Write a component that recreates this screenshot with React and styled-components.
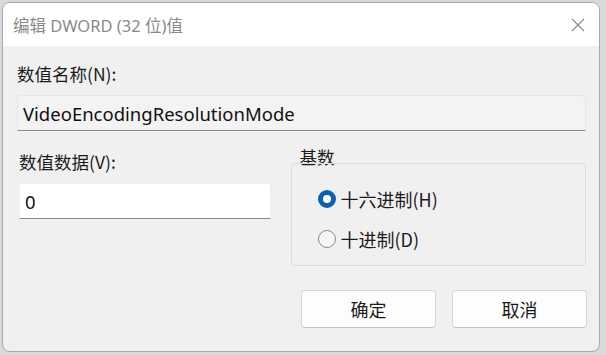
import styled, { createGlobalStyle } from 'styled-components';

const Global = createGlobalStyle`
  html, body {
    margin: 0;
    padding: 0;
    background: #d9d9d9;
  }
  body {
    font-family: "Noto Sans", "Noto Sans CJK SC", sans-serif;
  }
`;

const Page = styled.div`
  width: 606px;
  height: 355px;
  padding: 2px 6px 3px 2px;
  box-sizing: border-box;
`;

const Window = styled.div`
  height: 100%;
  border: 1px solid #a8a8a8;
  border-radius: 8px;
  overflow: hidden;
  background: #f0f0f0;
  display: flex;
  flex-direction: column;
  box-sizing: border-box;
`;

const TitleBar = styled.div`
  height: 43px;
  background: #ffffff;
  display: flex;
  align-items: center;
  justify-content: space-between;
  padding: 0 14px 0 10px;
  flex-shrink: 0;
`;

const Title = styled.span`
  font-size: 16.5px;
  color: #8a8a8a;
  font-family: "Noto Sans", "Noto Sans CJK SC", sans-serif;
`;

const Close = styled.svg`
  width: 14px;
  height: 14px;
`;

const Body = styled.div`
  flex: 1;
  padding: 18px 13px 0 14px;
  display: flex;
  flex-direction: column;
`;

const Label = styled.div`
  font-size: 17.5px;
  color: #1b1b1b;
  line-height: 20px;
  font-family: "Noto Sans CJK SC", sans-serif;
`;

const Field = styled.div`
  height: 36px;
  margin-top: ${p => p.$top || 8}px;
  width: ${p => p.$width || 'auto'};
  background: ${p => (p.$readonly ? '#f3f3f3' : '#ffffff')};
  border: 1px solid ${p => (p.$readonly ? '#e6e6e6' : '#f0f0f0')};
  border-bottom: 1px solid #8a8a8a;
  border-radius: 3px 3px 0 0;
  box-sizing: border-box;
  display: flex;
  align-items: center;
  padding-left: 5px;
  font-size: 18.5px;
  color: #111;
  font-family: "Noto Sans", sans-serif;
`;

const Row = styled.div`
  display: flex;
  margin-top: 16px;
`;

const LeftCol = styled.div`
  width: 272px;
  padding-left: 2px;
  padding-top: 5px;
`;

const GroupWrap = styled.div`
  width: 296px;
  display: flex;
  flex-direction: column;
`;

const GroupTitle = styled.div`
  font-size: 17.5px;
  color: #1b1b1b;
  line-height: 20px;
  padding-left: 9px;
  font-family: "Noto Sans CJK SC", sans-serif;
`;

const GroupBox = styled.div`
  margin-top: -4px;
  height: 103px;
  border: 1px solid #dcdcdc;
  border-radius: 3px;
  box-sizing: border-box;
  padding: 26px 0 0 26px;
  display: flex;
  flex-direction: column;
  gap: 22px;
`;

const Option = styled.label`
  display: flex;
  align-items: center;
  gap: 5px;
  font-size: 18px;
  color: #1b1b1b;
  line-height: 18px;
  font-family: "Noto Sans CJK SC", sans-serif;
`;

const Radio = styled.span`
  width: 18px;
  height: 18px;
  border-radius: 50%;
  box-sizing: border-box;
  flex-shrink: 0;
  ${p =>
    p.$checked
      ? `background: #ffffff; border: 5.5px solid #0d5fb0;`
      : `background: #f6f6f6; border: 1px solid #8a8a8a;`}
`;

const Buttons = styled.div`
  display: flex;
  justify-content: flex-end;
  gap: 16px;
  margin-top: 24px;
  margin-right: -1px;
`;

const Button = styled.button`
  width: 135px;
  height: 38px;
  background: #fdfdfd;
  border: 1px solid #d6d6d6;
  border-bottom-color: #c2c2c2;
  border-radius: 4px;
  font-size: 18px;
  color: #1b1b1b;
  font-family: "Noto Sans CJK SC", sans-serif;
  padding: 0;
`;

export default function App() {
  return (
    <Page>
      <Global />
      <Window>
        <TitleBar>
          <Title>编辑 DWORD (32 位)值</Title>
          <Close viewBox="0 0 14 14">
            <path d="M1 1 L13 13 M13 1 L1 13" stroke="#8a8a8a" strokeWidth="1.1" fill="none" />
          </Close>
        </TitleBar>
        <Body>
          <Label>数值名称(N):</Label>
          <Field $readonly $top={11}>VideoEncodingResolutionMode</Field>
          <Row>
            <LeftCol>
              <Label>数值数据(V):</Label>
              <Field $width="252px" $top={11}>0</Field>
            </LeftCol>
            <GroupWrap>
              <GroupTitle>基数</GroupTitle>
              <GroupBox>
                <Option>
                  <Radio $checked />
                  十六进制(H)
                </Option>
                <Option>
                  <Radio />
                  十进制(D)
                </Option>
              </GroupBox>
            </GroupWrap>
          </Row>
          <Buttons>
            <Button>确定</Button>
            <Button>取消</Button>
          </Buttons>
        </Body>
      </Window>
    </Page>
  );
}
